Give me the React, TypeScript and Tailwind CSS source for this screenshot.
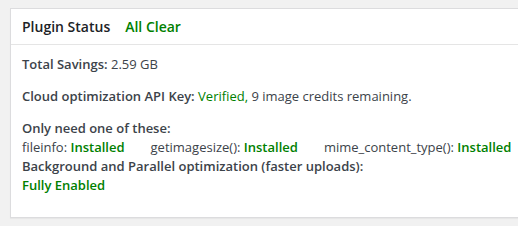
export default function App() {
  return (
    <div className="h-[226px] w-[518px] overflow-hidden bg-[#f1f1f1] pt-2 pl-[10px] text-[13px] text-[#3c434a]" style={{ fontFamily: '"Open Sans", "DejaVu Sans", sans-serif' }}>
      {/* Status card */}
      <div className="h-[210px] w-[560px] border border-[#dcdcde] bg-white shadow-[0_1px_1px_rgba(0,0,0,0.04)]">
        <div className="flex h-[36px] items-center gap-[15px] border-b border-[#e5e5e5] pl-[11px] text-[14px] font-semibold">
          <span className="text-[#1d2327]">Plugin Status</span>
          <span className="text-[#008000]">All Clear</span>
        </div>
        <div className="pl-[11px] pt-[9px] leading-[19px]">
          <p className="py-[1px]">
            <strong className="font-semibold">Total Savings:</strong> 2.59 GB
          </p>
          <p className="mt-[12px]">
            <strong className="font-semibold">Cloud optimization API Key:</strong>{' '}
            <span className="text-[#008000]">Verified,</span> 9 image credits remaining.
          </p>
          <p className="mt-[13px] font-semibold">Only need one of these:</p>
          <div className="flex gap-[26px] whitespace-nowrap">
            <span>
              fileinfo: <strong className="font-semibold text-[#008000]">Installed</strong>
            </span>
            <span>
              getimagesize(): <strong className="font-semibold text-[#008000]">Installed</strong>
            </span>
            <span>
              mime_content_type(): <strong className="font-semibold text-[#008000]">Installed</strong>
            </span>
          </div>
          <p className="font-semibold">Background and Parallel optimization (faster uploads):</p>
          <p className="font-semibold text-[#008000]">Fully Enabled</p>
        </div>
      </div>
    </div>
  )
}
